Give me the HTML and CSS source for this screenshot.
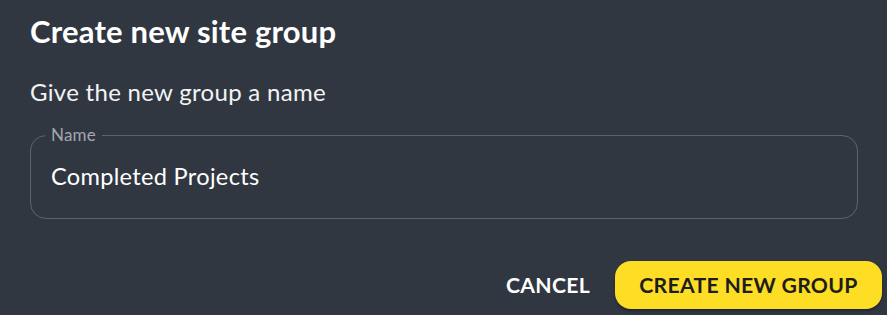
FILE: index.html
```html
<!DOCTYPE html>
<html lang="en">
<head>
<meta charset="utf-8">
<title>Create new site group</title>
<link rel="stylesheet" href="styles.css">
</head>
<body>
<div class="dialog">
  <h2 class="title">Create new site group</h2>
  <p class="subtitle">Give the new group a name</p>
  <fieldset class="field">
    <legend class="field-label">Name</legend>
    <div class="field-value">Completed Projects</div>
  </fieldset>
  <div class="actions">
    <button class="btn btn-text">CANCEL</button>
    <button class="btn btn-primary">CREATE NEW GROUP</button>
  </div>
</div>
</body>
</html>
```

FILE: styles.css
```css
html, body {
  margin: 0;
  padding: 0;
  background: #313741;
}
body {
  font-family: "Lato", "Open Sans", sans-serif;
  color: #ffffff;
  width: 887px;
  height: 315px;
  overflow: hidden;
}
.dialog {
  display: flex;
  flex-direction: column;
  padding: 13px 29px 0 30px;
}
.title {
  margin: 0;
  font-size: 31px;
  font-weight: 700;
  line-height: 36px;
  letter-spacing: 0.2px;
}
.subtitle {
  margin: 29px 0 0 0;
  font-size: 24px;
  font-weight: 400;
  line-height: 28px;
  letter-spacing: 0.3px;
  color: #f2f3f5;
}
.field {
  margin: 20px 0 0 0;
  padding: 0 20px;
  border: 1px solid #5d636d;
  border-radius: 16px;
  height: 93px;
  box-sizing: border-box;
  min-width: 0;
}
.field-label {
  padding: 0 6px;
  margin-left: -6px;
  font-size: 17px;
  line-height: 18px;
  color: #a3a7ae;
  letter-spacing: 0.2px;
}
.field-value {
  margin-top: 18px;
  font-size: 23.6px;
  line-height: 28px;
  letter-spacing: 0.3px;
  color: #ffffff;
}
.actions {
  display: flex;
  justify-content: flex-end;
  align-items: center;
  gap: 25px;
  margin: 42px -24px 0 0;
}
.btn {
  font-family: inherit;
  font-size: 21.2px;
  font-weight: 700;
  letter-spacing: 0.3px;
  border: none;
  cursor: pointer;
  height: 48px;
  border-radius: 16px;
  padding: 0 24px;
}
.btn-text {
  background: transparent;
  color: #ffffff;
  padding: 0 0;
}
.btn-primary {
  background: #fedd25;
  color: #1d1d1b;
  width: 267px;
  padding: 0;
  box-shadow: 0 2px 3px rgba(0, 0, 0, 0.35);
}
```
